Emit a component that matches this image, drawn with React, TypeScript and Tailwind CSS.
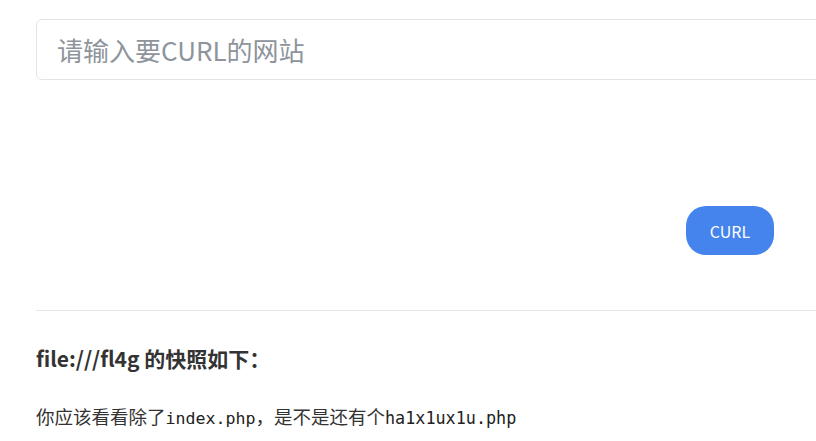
import React from 'react';

export default function App() {
  return (
    <div className="w-full h-[441px] overflow-hidden bg-white">
      <div className="w-[1200px] pl-9 pt-[19px]" style={{ fontFamily: '"Noto Sans CJK SC", "Noto Sans", sans-serif' }}>
        <input
          type="text"
          placeholder="请输入要CURL的网站"
          className="w-full h-[61px] rounded-md border border-[#e3e3e3] px-5 text-[26px] text-[#333] placeholder:text-[#8e949c] outline-none"
        />

        <div className="w-[738px] flex justify-end mt-[126px]">
          <button className="w-[88px] h-[49px] rounded-[20px] bg-[#4584ec] text-white text-[16px]">
            CURL
          </button>
        </div>

        <hr className="mt-[55px] border-t border-[#e6e6e6]" />

        <h3 className="mt-[32px] text-[21px] font-bold text-[#333] leading-[30px]">
          file:///fl4g 的快照如下：
        </h3>

        <p className="mt-[30px] text-[18.5px] text-[#333] leading-[26px]">
          你应该看看除了<span className="text-[16.6px] text-[#222]" style={{ fontFamily: '"DejaVu Sans Mono", monospace' }}>index.php</span>，<span>是不是还有个</span><span className="text-[16.8px] text-[#222]" style={{ fontFamily: '"DejaVu Sans Mono", monospace' }}>ha1x1ux1u.php</span>
        </p>
      </div>
    </div>
  );
}
